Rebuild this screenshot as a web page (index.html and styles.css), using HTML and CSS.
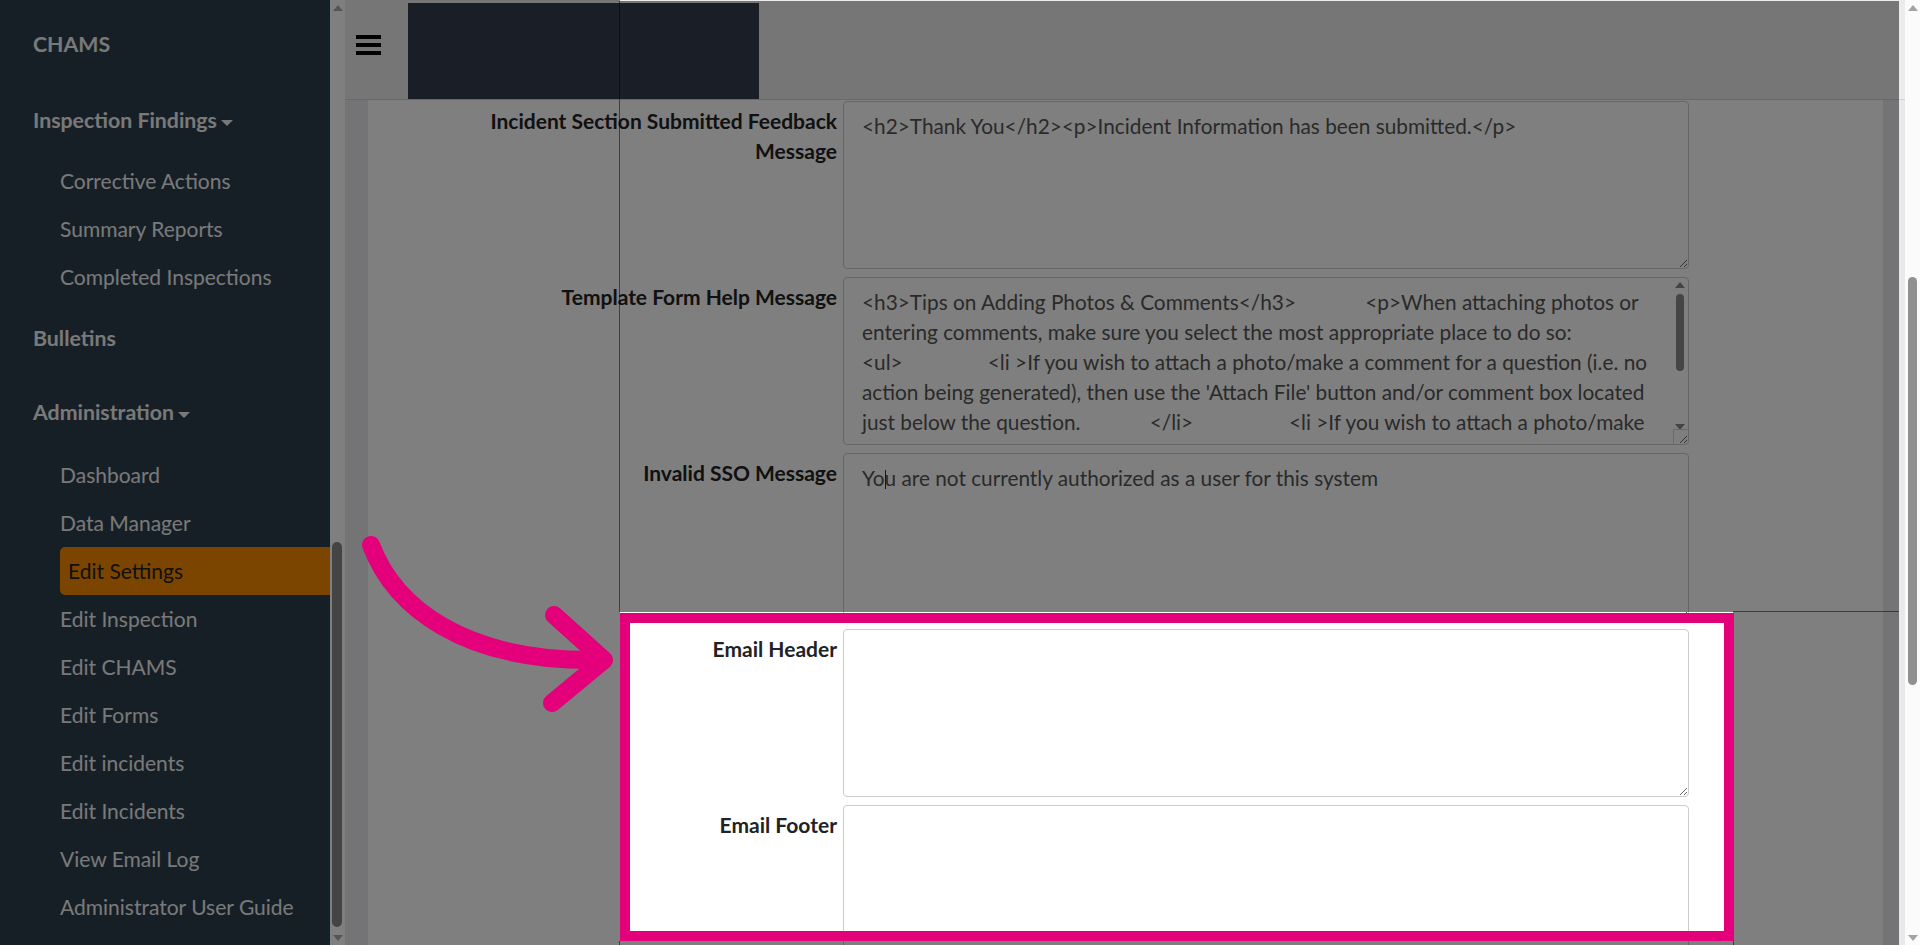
FILE: index.html
```html
<!DOCTYPE html>
<html lang="en">
<head>
  <meta charset="UTF-8">
  <meta name="viewport" content="width=device-width, initial-scale=1.0">
  <title>CHAMS - Edit Settings</title>
  <link rel="stylesheet" href="styles.css">
</head>
<body>
  <div class="app">
    <nav class="sidebar">
      <div class="brand">CHAMS</div>
      <div class="nav-head">Inspection Findings<span class="caret"></span></div>
      <ul class="sub">
        <li>Corrective Actions</li>
        <li>Summary Reports</li>
        <li>Completed Inspections</li>
      </ul>
      <div class="nav-head">Bulletins</div>
      <div class="nav-head admin">Administration<span class="caret"></span></div>
      <ul class="sub">
        <li>Dashboard</li>
        <li>Data Manager</li>
        <li class="active">Edit Settings</li>
        <li>Edit Inspection</li>
        <li>Edit CHAMS</li>
        <li>Edit Forms</li>
        <li>Edit incidents</li>
        <li>Edit Incidents</li>
        <li>View Email Log</li>
        <li>Administrator User Guide</li>
      </ul>
    </nav>

    <div class="side-scroll">
      <span class="arrow-up"></span>
      <span class="thumb"></span>
      <span class="arrow-down"></span>
    </div>

    <div class="main">
      <div class="topbar">
        <div class="burger"><span></span><span></span><span></span></div>
        <div class="logo"></div>
      </div>

      <div class="content">
        <div class="form">
          <label class="label">Incident Section Submitted Feedback Message</label>
          <div class="field">
            <textarea class="input">&lt;h2&gt;Thank You&lt;/h2&gt;&lt;p&gt;Incident Information has been submitted.&lt;/p&gt;</textarea>
          </div>

          <label class="label">Template Form Help Message</label>
          <div class="field">
            <textarea class="input no-wrap" wrap="off">&lt;h3&gt;Tips on Adding Photos &amp; Comments&lt;/h3&gt;             &lt;p&gt;When attaching photos or
entering comments, make sure you select the most appropriate place to do so:
&lt;ul&gt;                &lt;li &gt;If you wish to attach a photo/make a comment for a question (i.e. no
action being generated), then use the 'Attach File' button and/or comment box located
just below the question.             &lt;/li&gt;                  &lt;li &gt;If you wish to attach a photo/make
a comment that then requires an action, then use the 'Attach File' button under the
action section.             &lt;/li&gt;                &lt;/ul&gt;
&lt;p&gt;Photos and comments will then appear in the report.&lt;/p&gt;</textarea>
            <div class="tbar">
              <span class="arrow-up"></span>
              <span class="thumb"></span>
              <span class="arrow-down"></span>
            </div>
            <div class="corner"></div>
          </div>

          <label class="label">Invalid SSO Message</label>
          <div class="field">
            <textarea class="input">You are not currently authorized as a user for this system</textarea>
            <span class="text-cursor"></span>
          </div>

          <label class="label">Email Header</label>
          <div class="field">
            <textarea class="input"></textarea>
          </div>

          <label class="label">Email Footer</label>
          <div class="field">
            <textarea class="input"></textarea>
          </div>
        </div>
      </div>
    </div>
  </div>

  <div class="page-scroll">
    <span class="arrow-up"></span>
    <span class="thumb"></span>
    <span class="arrow-down"></span>
  </div>

  <!-- tour overlay -->
  <div class="dim dim-left"></div>
  <div class="dim dim-top"></div>
  <div class="dim dim-right"></div>
  <div class="dim dim-bottom"></div>
  <div class="spot"></div>

  <svg class="pointer" width="1920" height="945" viewBox="0 0 1920 945">
    <path d="M371 545 C394 606 462 662 598 660" />
    <path d="M554 615 L604 660 L552 703" />
  </svg>
</body>
</html>
```

FILE: styles.css
```css
body {
  margin: 0;
  width: 1920px;
  height: 945px;
  overflow: hidden;
  position: relative;
  display: flex;
  font-family: Lato, "Liberation Sans", sans-serif;
}
.app {
  display: flex;
  width: 1905px;
  height: 945px;
}

/* sidebar */
.sidebar {
  width: 330px;
  background-color: #2c3e4d;
  color: #f2f2f2;
  font-size: 21px;
}
.brand {
  height: 83px;
  padding: 29px 0 0 33px;
  box-sizing: border-box;
  line-height: 30px;
  font-weight: bold;
  font-size: 21.3px;
}
.nav-head {
  height: 74px;
  line-height: 74px;
  padding-left: 33px;
  font-weight: bold;
  font-size: 21.3px;
}
.nav-head.admin {
  height: 76px;
}
.caret {
  display: inline-block;
  margin-left: 4px;
  vertical-align: middle;
  border-left: 6px solid transparent;
  border-right: 6px solid transparent;
  border-top: 6px solid #f2f2f2;
}
.sub {
  list-style-type: none;
  margin: 0;
  padding: 0;
}
.sub li {
  height: 48px;
  line-height: 48px;
  margin-left: 60px;
}
.sub li.active {
  padding-left: 8px;
  background-color: #f68a00;
  color: #222;
  border-radius: 5px 0 0 5px;
}

/* scrollbars */
.side-scroll {
  width: 15px;
  background-color: #fff;
  position: relative;
}
.side-scroll .thumb {
  position: absolute;
  left: 2px;
  top: 542px;
  width: 10px;
  height: 385px;
  border-radius: 5px;
  background-color: #888;
}
.arrow-up,
.arrow-down {
  position: absolute;
  left: 3px;
  width: 0;
  height: 0;
  border-left: 5px solid transparent;
  border-right: 5px solid transparent;
}
.arrow-up {
  top: 5px;
  border-bottom: 6px solid #aaa;
}
.arrow-down {
  bottom: 4px;
  border-top: 6px solid #aaa;
}
.page-scroll {
  width: 15px;
  height: 945px;
  background-color: #fbfbfb;
  position: relative;
}
.page-scroll .thumb {
  position: absolute;
  left: 3px;
  top: 277px;
  width: 9px;
  height: 408px;
  border-radius: 5px;
  background-color: #909090;
}
.page-scroll .arrow-up {
  border-bottom-color: #a3a3a3;
}
.page-scroll .arrow-down {
  border-top-color: #a3a3a3;
}

/* main area */
.main {
  flex: 1;
  display: flex;
  flex-direction: column;
  background-color: #e9e9ec;
}
.topbar {
  height: 99px;
  flex-shrink: 0;
  display: flex;
  align-items: flex-start;
  background-color: #ececec;
  border-bottom: 1px solid #d2d2d2;
}
.burger {
  width: 25px;
  margin: 35px 0 0 11px;
  display: flex;
  flex-direction: column;
  gap: 4px;
}
.burger span {
  height: 4px;
  background-color: #000;
}
.logo {
  width: 351px;
  height: 96px;
  margin: 3px 0 0 27px;
  background-color: #343e4e;
}
.content {
  flex: 1;
  margin: 0 22px 0 23px;
  padding-top: 1px;
  background-color: #fff;
}
.form {
  display: grid;
  grid-template-columns: 360px 846px;
  column-gap: 6px;
  row-gap: 8px;
  margin-left: 109px;
}
.label {
  padding-top: 5px;
  text-align: right;
  font-weight: bold;
  font-size: 21px;
  line-height: 30px;
  color: #222;
}
.field {
  position: relative;
}
.input {
  display: block;
  width: 846px;
  height: 168px;
  margin: 0;
  padding: 9px 18px;
  box-sizing: border-box;
  border: 1px solid #ccc;
  border-radius: 4px;
  font-family: Lato, "Liberation Sans", sans-serif;
  font-size: 20.8px;
  line-height: 30px;
  color: #555;
  background-color: #fff;
  resize: vertical;
}
.no-wrap {
  overflow: hidden;
  white-space: pre;
  padding-right: 30px;
}
.text-cursor {
  position: absolute;
  left: 42px;
  top: 17px;
  width: 1px;
  height: 19px;
  background-color: #333;
}
.tbar {
  position: absolute;
  top: 1px;
  right: 4px;
  width: 10px;
  height: 152px;
}
.tbar .arrow-up {
  left: 0;
  top: 4px;
  border-bottom-color: #888;
}
.tbar .arrow-down {
  left: 0;
  bottom: 0;
  border-top-color: #888;
}
.tbar .thumb {
  position: absolute;
  left: 1px;
  top: 16px;
  width: 8px;
  height: 77px;
  border-radius: 4px;
  background-color: #8a8a8a;
}
.corner {
  position: absolute;
  right: 1px;
  bottom: 1px;
  width: 14px;
  height: 14px;
  border-left: 1px solid #d4d4d4;
  border-top: 1px solid #d4d4d4;
}

/* tour overlay */
.dim {
  position: absolute;
  background-color: rgba(0, 0, 0, 0.5);
}
.dim-left {
  left: 0;
  top: 0;
  width: 620px;
  height: 945px;
}
.dim-top {
  left: 619px;
  top: 1px;
  width: 1280px;
  height: 611px;
}
.dim-right {
  left: 1733px;
  top: 611px;
  width: 166px;
  height: 334px;
}
.dim-bottom {
  left: 619px;
  top: 941px;
  width: 1115px;
  height: 4px;
}
.spot {
  position: absolute;
  left: 620px;
  top: 613px;
  width: 1114px;
  height: 328px;
  box-sizing: border-box;
  border: 10px solid #e4007a;
}
.pointer {
  position: absolute;
  left: 0;
  top: 0;
  pointer-events: none;
}
.pointer path {
  fill: none;
  stroke: #e4007a;
  stroke-width: 18;
  stroke-linecap: round;
  stroke-linejoin: round;
}
```
